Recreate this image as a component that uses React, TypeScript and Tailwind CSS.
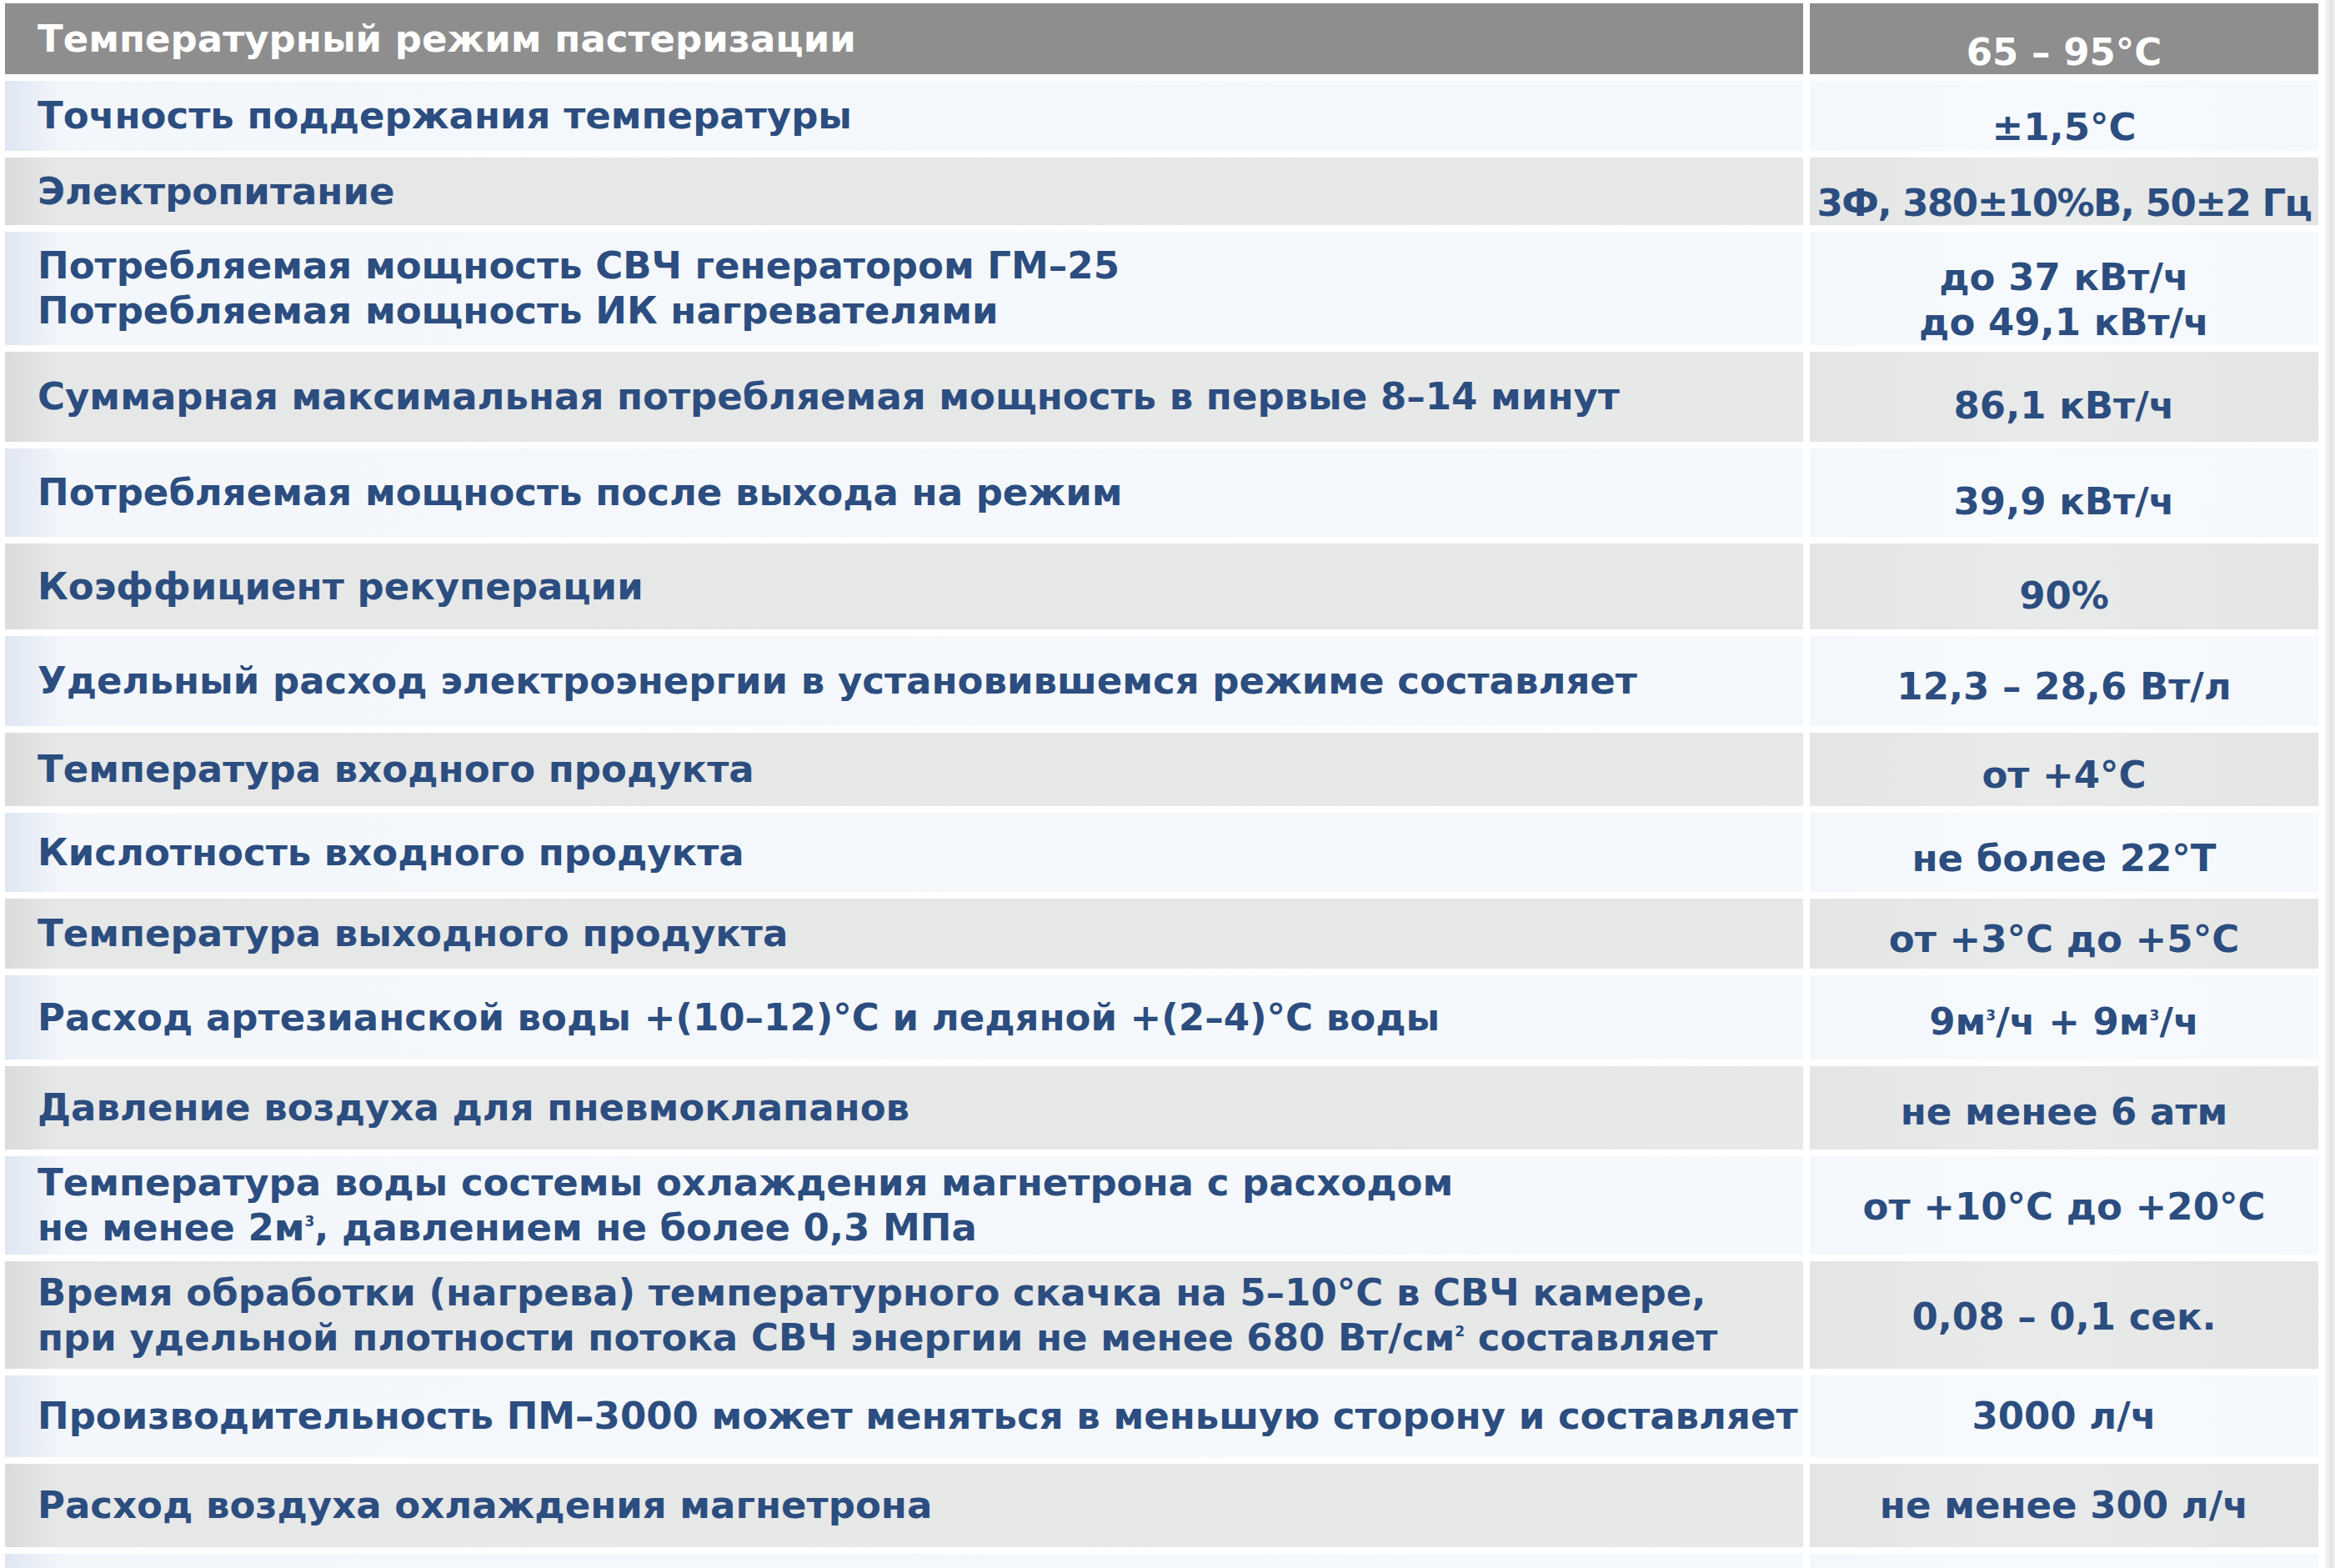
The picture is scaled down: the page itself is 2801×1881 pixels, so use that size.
import type { ReactNode } from 'react'

type Row = {
  tone: 'head' | 'light' | 'grey'
  h: string
  shift: string
  left: ReactNode[]
  right: ReactNode[]
  rx?: string
}

const Sup = ({ children }: { children: ReactNode }) => (
  <span className="relative -top-[17px] align-baseline text-[17px] font-bold leading-none">{children}</span>
)

const rows: Row[] = [
  { tone: 'head', h: 'h-[85px]', shift: 'translate-y-[16px]', left: ['Температурный режим пастеризации'], right: ['65 – 95°C'] },
  { tone: 'light', h: 'h-[84px]', shift: 'translate-y-[14px]', left: ['Точность поддержания температуры'], right: ['±1,5°C'] },
  { tone: 'grey', h: 'h-[81px]', shift: 'translate-y-[14px]', left: ['Электропитание'], right: ['3Ф, 380±10%В, 50±2 Гц'], rx: 'tracking-[-1.5px]' },
  {
    tone: 'light',
    h: 'h-[136px]',
    shift: 'translate-y-[14px]',
    left: ['Потребляемая мощность СВЧ генератором ГМ–25', 'Потребляемая мощность ИК нагревателями'],
    right: ['до 37 кВт/ч', 'до 49,1 кВт/ч'],
  },
  { tone: 'grey', h: 'h-[108px]', shift: 'translate-y-[11px]', left: ['Суммарная максимальная потребляемая мощность в первые 8–14 минут'], right: ['86,1 кВт/ч'] },
  { tone: 'light', h: 'h-[106px]', shift: 'translate-y-[11px]', left: ['Потребляемая мощность после выхода на режим'], right: ['39,9 кВт/ч'] },
  { tone: 'grey', h: 'h-[103px]', shift: 'translate-y-[11px]', left: ['Коэффициент рекуперации'], right: ['90%'] },
  { tone: 'light', h: 'h-[108px]', shift: 'translate-y-[7px]', left: ['Удельный расход электроэнергии в установившемся режиме составляет'], right: ['12,3 – 28,6 Вт/л'] },
  { tone: 'grey', h: 'h-[88px]', shift: 'translate-y-[7px]', left: ['Температура входного продукта'], right: ['от +4°C'] },
  { tone: 'light', h: 'h-[95px]', shift: 'translate-y-[7px]', left: ['Кислотность входного продукта'], right: ['не более 22°Т'] },
  { tone: 'grey', h: 'h-[84px]', shift: 'translate-y-[7px]', left: ['Температура выходного продукта'], right: ['от +3°С до +5°С'] },
  {
    tone: 'light',
    h: 'h-[101px]',
    shift: 'translate-y-[5px]',
    left: ['Расход артезианской воды +(10–12)°С и ледяной +(2–4)°С воды'],
    right: [
      <>
        9м<Sup>3</Sup>/ч + 9м<Sup>3</Sup>/ч
      </>,
    ],
  },
  { tone: 'grey', h: 'h-[100px]', shift: 'translate-y-[5px]', left: ['Давление воздуха для пневмоклапанов'], right: ['не менее 6 атм'] },
  {
    tone: 'light',
    h: 'h-[118px]',
    shift: 'translate-y-[2px]',
    left: [
      'Температура воды состемы охлаждения магнетрона с расходом',
      <>
        не менее 2м<Sup>3</Sup>, давлением не более 0,3 МПа
      </>,
    ],
    right: ['от +10°С до +20°С'],
  },
  {
    tone: 'grey',
    h: 'h-[129px]',
    shift: 'translate-y-[2px]',
    left: [
      'Время обработки (нагрева) температурного скачка на 5–10°С в СВЧ камере,',
      <>
        при удельной плотности потока СВЧ энергии не менее 680 Вт/см<Sup>2</Sup> составляет
      </>,
    ],
    right: ['0,08 – 0,1 сек.'],
  },
  { tone: 'light', h: 'h-[98px]', shift: 'translate-y-[0px]', left: ['Производительность ПМ–3000 может меняться в меньшую сторону и составляет'], right: ['3000 л/ч'] },
  { tone: 'grey', h: 'h-[100px]', shift: 'translate-y-[0px]', left: ['Расход воздуха охлаждения магнетрона'], right: ['не менее 300 л/ч'] },
  { tone: 'light', h: 'h-[60px]', shift: 'translate-y-[0px]', left: [], right: [] },
]

const leftBg = {
  head: 'bg-[#8e8e8e] text-white',
  light: 'bg-[linear-gradient(to_right,#dfe6f3_0px,#f3f7fb_70px,#f6f9fc_100%)] text-[#2c4d7f]',
  grey: 'bg-[linear-gradient(to_right,#d9dbdc_0px,#e6e7e7_60px,#e7e8e8_100%)] text-[#2c4d7f]',
}

const rightBg = {
  head: 'bg-[#8e8e8e] text-white',
  light: 'bg-[linear-gradient(to_right,#f4f7fb,#f7fafd_40%,#f5f8fc)] text-[#2c4d7f]',
  grey: 'bg-[linear-gradient(to_right,#e4e5e5,#e9eaea_45%,#e4e5e5)] text-[#2c4d7f]',
}

export default function App() {
  return (
    <div className="flex h-[1881px] w-[2801px] overflow-hidden bg-white font-['DejaVu_Sans','Liberation_Sans',sans-serif] font-bold">
      <div className="flex flex-col gap-[8px] pl-[6px] pt-[4px]">
        {rows.map((r, i) => (
          <div key={i} className={`flex shrink-0 gap-[8px] ${r.h}`}>
            <div className={`flex w-[2157px] flex-col justify-center pl-[39px] text-[45px] leading-[54px] whitespace-nowrap ${leftBg[r.tone]}`}>
              {r.left.map((t, j) => (
                <div key={j}>{t}</div>
              ))}
            </div>
            <div className={`flex w-[610px] flex-col items-center justify-center text-[45px] leading-[54px] whitespace-nowrap ${rightBg[r.tone]}`}>
              <div className={`flex flex-col items-center ${r.shift} ${r.rx ?? ''}`}>
                {r.right.map((t, j) => (
                  <div key={j}>{t}</div>
                ))}
              </div>
            </div>
          </div>
        ))}
      </div>
      <div className="ml-[6px] h-full w-[14px] bg-[linear-gradient(to_right,#ffffff,#e2e3e4_70%,#f2f2f2)]" />
    </div>
  )
}
